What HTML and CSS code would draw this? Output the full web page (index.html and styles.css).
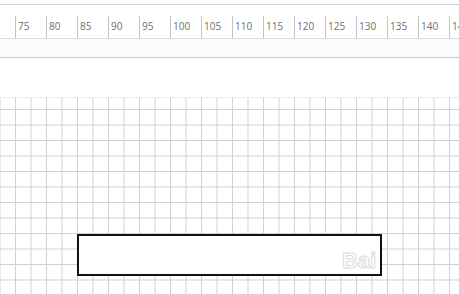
FILE: index.html
```html
<!DOCTYPE html>
<html>
<head>
<meta charset="utf-8">
<link rel="stylesheet" href="styles.css">
</head>
<body>
<div class="page">
  <div class="top-gap"></div>
  <div class="ruler">
    <div class="tick"><span>75</span></div>
    <div class="tick"><span>80</span></div>
    <div class="tick"><span>85</span></div>
    <div class="tick"><span>90</span></div>
    <div class="tick"><span>95</span></div>
    <div class="tick"><span>100</span></div>
    <div class="tick"><span>105</span></div>
    <div class="tick"><span>110</span></div>
    <div class="tick"><span>115</span></div>
    <div class="tick"><span>120</span></div>
    <div class="tick"><span>125</span></div>
    <div class="tick"><span>130</span></div>
    <div class="tick"><span>135</span></div>
    <div class="tick"><span>140</span></div>
    <div class="tick"><span>14</span></div>
  </div>
  <div class="band"></div>
  <div class="gap"></div>
  <div class="canvas">
    <div class="shape"></div>
    <div class="watermark">Bai</div>
  </div>
</div>
</body>
</html>
```

FILE: styles.css
```css
html, body {
  margin: 0;
  padding: 0;
  background: #ffffff;
  overflow: hidden;
}
.page {
  width: 459px;
  height: 294px;
  display: flex;
  flex-direction: column;
  font-family: "Open Sans", "Noto Sans", "Liberation Sans", sans-serif;
}
.top-gap {
  height: 4px;
  flex: none;
}
.ruler {
  flex: none;
  height: 33px;
  border-top: 1px solid #d2d2d2;
  border-bottom: 1px solid #dcdcdc;
  display: flex;
  align-items: flex-end;
  padding-left: 15px;
  overflow: hidden;
  white-space: nowrap;
}
.tick {
  flex: none;
  width: 30px;
  height: 22px;
  border-left: 1px solid #c4c4c4;
  position: relative;
}
.tick span {
  position: absolute;
  left: 2px;
  top: 3px;
  font-size: 10px;
  line-height: 14px;
  color: #6f6f6f;
}
.band {
  flex: none;
  height: 18px;
  background: #fbfbfb;
  border-bottom: 1px solid #cdc6cf;
}
.gap {
  flex: none;
  height: 39px;
}
.canvas {
  flex: 1;
  position: relative;
  border-top: 1px solid #f3e8f0;
  background-color: #ffffff;
  background-image:
    linear-gradient(to right, #d0d0d0 1px, transparent 1px),
    linear-gradient(to bottom, #d0d0d0 1px, transparent 1px);
  background-size: 15.5px 15.5px, 15.5px 15.5px;
  background-position: 15px 11px, 15px 11px;
}
.shape {
  margin-left: 77px;
  margin-top: 136px;
  width: 301px;
  height: 38px;
  border: 2px solid #111111;
  background: #ffffff;
}
.watermark {
  position: absolute;
  left: 342px;
  top: 150px;
  font-family: "Liberation Sans", Arial, sans-serif;
  font-weight: bold;
  font-size: 22px;
  color: rgba(255, 255, 255, 0.6);
  -webkit-text-stroke: 1px rgba(180, 180, 180, 0.5);
}
```
